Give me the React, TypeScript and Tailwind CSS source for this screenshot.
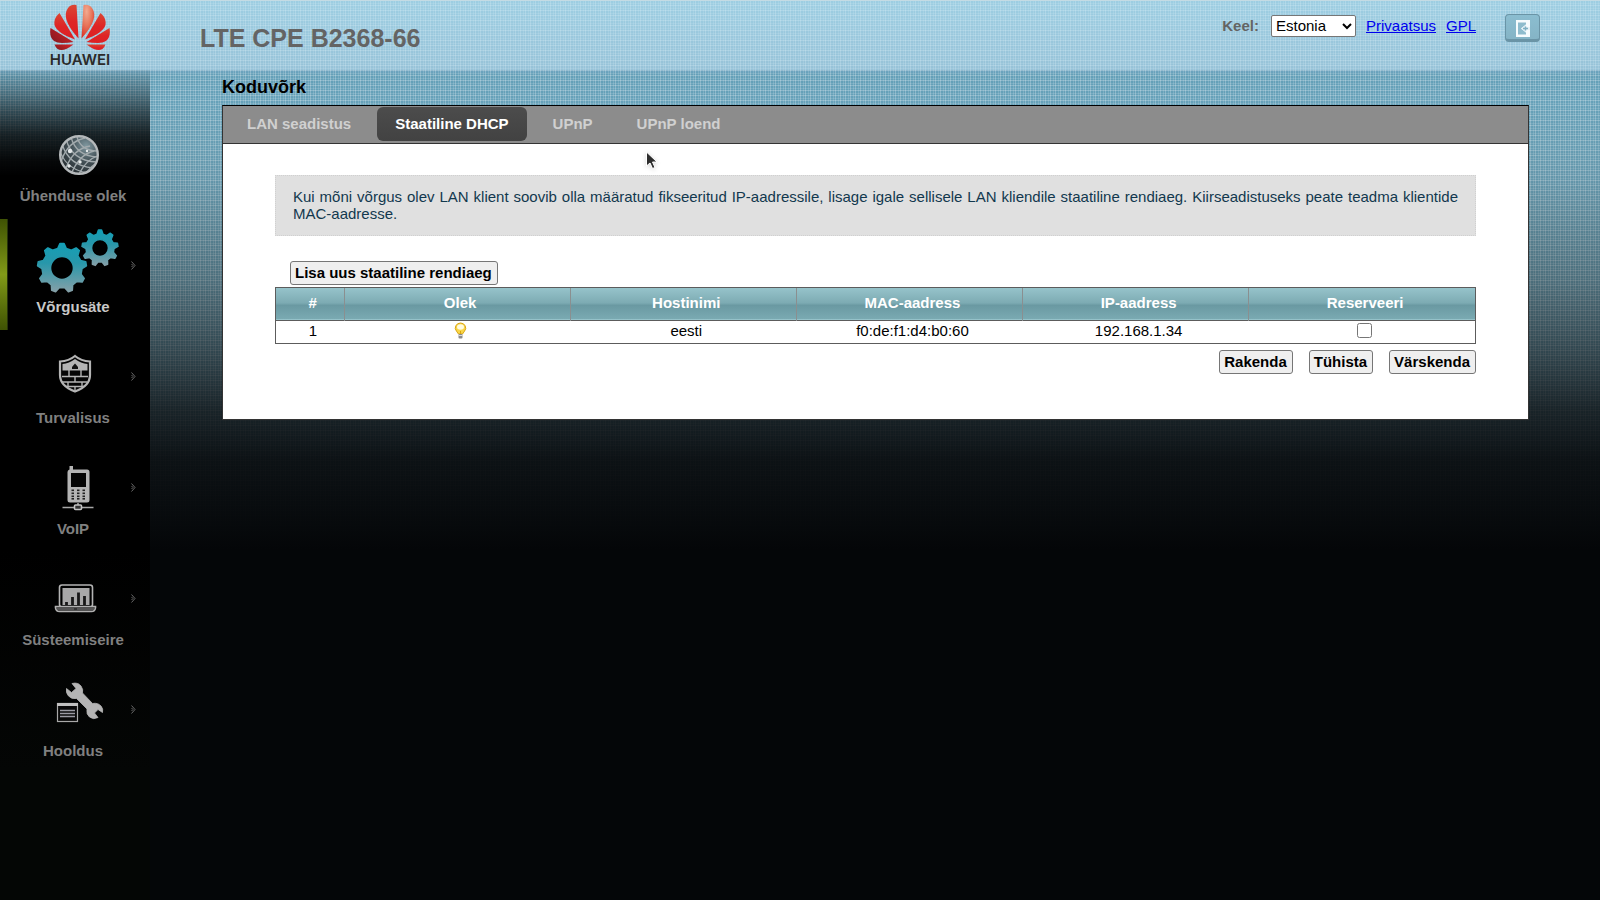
import { useState, type ReactNode } from "react";

interface MenuItem {
  label: string;
  icon: ReactNode;
  hasSubmenu: boolean;
}

interface Lease {
  id: number;
  host: string;
  mac: string;
  ip: string;
}

const leases: Lease[] = [{ id: 1, host: "eesti", mac: "f0:de:f1:d4:b0:60", ip: "192.168.1.34" }];

const tabs = ["LAN seadistus", "Staatiline DHCP", "UPnP", "UPnP loend"];

const columns = ["Olek", "Hostinimi", "MAC-aadress", "IP-aadress", "Reserveeri"];

// closed outline of a cog wheel, first tooth pointing up
const gearPath = (cx: number, cy: number, outer: number, body: number, teeth: number) => {
  const step = (Math.PI * 2) / teeth;
  const points: string[] = [];
  for (let i = 0; i < teeth; i++) {
    const mid = i * step - Math.PI / 2;
    const corners: [number, number][] = [
      [mid - step * 0.3, body],
      [mid - step * 0.12, outer],
      [mid + step * 0.12, outer],
      [mid + step * 0.3, body],
    ];
    corners.forEach(([angle, r]) => {
      points.push(`${(cx + Math.cos(angle) * r).toFixed(2)} ${(cy + Math.sin(angle) * r).toFixed(2)}`);
    });
  }
  return `M${points.join("L")}Z`;
};

const circlePath = (cx: number, cy: number, r: number) =>
  `M${cx - r} ${cy}a${r} ${r} 0 1 0 ${r * 2} 0a${r} ${r} 0 1 0 ${-r * 2} 0Z`;

function MenuIcon({ children }: { children: ReactNode }) {
  return (
    <svg viewBox="0 0 100 78" className="h-[78px] w-[100px]" fill="none" aria-hidden="true">
      {children}
    </svg>
  );
}

const globeIcon = (
  <MenuIcon>
    <defs>
      <radialGradient id="globe" cx="0.7" cy="0.25" r="0.8">
        <stop offset="0" stopColor="#7f979f" />
        <stop offset="0.5" stopColor="#46545a" />
        <stop offset="1" stopColor="#2a3236" />
      </radialGradient>
      <clipPath id="globe-clip">
        <circle cx="56" cy="47" r="18" />
      </clipPath>
    </defs>
    <circle cx="56" cy="47" r="18" fill="url(#globe)" />
    <g clipPath="url(#globe-clip)" stroke="#a3abae" strokeWidth="1.3">
      <path d="M54 29Q58 43 75 43M48 29Q53 48 75 49M43 31Q49 53 74 54M39 36Q46 58 70 60M37 43Q43 61 64 65" />
      <path d="M62 30Q44 34 38 54M67 38Q50 41 43 60M71 43Q57 46 49 64M74 48Q63 52 56 66M75 54Q68 58 63 65" />
    </g>
    <g fill="#e4e8e9">
      <circle cx="47" cy="43" r="2.2" />
      <circle cx="57" cy="54" r="1.7" />
      <circle cx="46" cy="58" r="1.7" />
      <circle cx="64" cy="43" r="1.2" />
    </g>
    <circle cx="56" cy="47" r="18.8" stroke="#b5b9bb" strokeWidth="2.4" />
  </MenuIcon>
);

const gearsIcon = (
  <MenuIcon>
    <defs>
      <linearGradient id="gear" x1="0" y1="0" x2="0" y2="1">
        <stop offset="0" stopColor="#149fb6" />
        <stop offset="0.4" stopColor="#2797aa" />
        <stop offset="1" stopColor="#84a0a8" />
      </linearGradient>
    </defs>
    <g fill="url(#gear)" fillRule="evenodd" stroke="url(#gear)" strokeWidth="1.6" strokeLinejoin="round">
      <path d={gearPath(39, 49, 24.5, 20, 9) + circlePath(39, 49, 11.5)} />
      <path d={gearPath(77, 29, 18, 14, 9) + circlePath(77, 29, 8.5)} />
    </g>
  </MenuIcon>
);

const shieldIcon = (
  <MenuIcon>
    <path
      d="M52 26Q58 31 67 31.5V45Q67 56 52 61.5Q37 56 37 45V31.5Q46 31 52 26Z"
      fill="#050505"
      stroke="#b4b4b4"
      strokeWidth="2.2"
    />
    <path d="M52 29Q58 33.500 64.500 34V40.500H39.500V34Q46 33.500 52 29Z" fill="#b4b4b4" />
    <path d="M49 39V37L52 33.500L55 37V39Z" fill="#111" />
    <path
      d="M39 46.5H65M39 52H64M43 56.5H61M46 40V46M58 40V46M52 47V52M52 57V61M45 52V56M59 52V56"
      stroke="#b4b4b4"
      strokeWidth="1.4"
    />
  </MenuIcon>
);

const phoneIcon = (
  <MenuIcon>
    <path
      d="M46.500 25H50V28.500H64Q66.500 28.500 66.500 31V59Q66.500 61.500 64 61.500H47Q44.500 61.500 44.500 59V31Q44.500 29 46.500 28.500Z"
      fill="#b4b4b4"
    />
    <rect x="48" y="32" width="15" height="14" fill="#040404" />
    <g fill="#222">
      {[48.5, 54, 59.5].map((x) =>
        [48.5, 51.5, 54.5, 57].map((y) => <rect key={`${x}-${y}`} x={x} y={y} width="2.5" height="1.6" />),
      )}
    </g>
    <path d="M39.500 66.500H70.500M55 62V64" stroke="#a8a8a8" strokeWidth="1.5" />
    <rect x="51.500" y="64" width="7" height="4.500" rx="1" fill="#333" stroke="#c4c4c4" strokeWidth="1.6" />
  </MenuIcon>
);

const laptopIcon = (
  <MenuIcon>
    <rect x="36.500" y="33" width="33" height="22" rx="2.500" stroke="#b4b4b4" strokeWidth="1.6" />
    <rect x="39.500" y="36" width="27" height="17" fill="#a8a8a8" />
    <path d="M43.500 53V50M49.500 53V45M55.500 53V40.500M61.500 53V44" stroke="#181818" strokeWidth="2.8" />
    <path d="M32.500 54.500H72.500V56Q72 59.500 68.500 59.500H36.500Q33 59.500 32.500 56Z" fill="#333" stroke="#b0b0b0" strokeWidth="1.6" />
    <path d="M34 57H51M54 57H71" stroke="#777" strokeWidth="1" />
  </MenuIcon>
);

const toolsIcon = (
  <MenuIcon>
    <rect x="34.500" y="40.500" width="20" height="18" fill="#080808" stroke="#a8a8a8" strokeWidth="1.2" />
    <path d="M34 41.500H55" stroke="#c0c0c0" strokeWidth="3" />
    <path d="M37 47.500H52M37 50.500H52M37 53.500H52" stroke="#9a9aa2" strokeWidth="1.4" />
    <path
      d="M49 20.500Q55 19 58 23Q60.500 26.500 59.500 30L69.500 40.500Q75 39.500 78 43Q80.500 46 79.500 49.500L75 46.500L71.500 50L75 54.500Q70.500 57 66.500 54Q63 51 64 46L53.500 35.500Q48.500 36.500 45.500 33Q42.500 29.500 43.500 25.500L48.500 29.500L53 25.500Z"
      fill="#b4b4b4"
      stroke="#b4b4b4"
      strokeWidth="0.8"
      strokeLinejoin="round"
    />
  </MenuIcon>
);

const menu: MenuItem[] = [
  { label: "Ühenduse olek", icon: globeIcon, hasSubmenu: false },
  { label: "Võrgusäte", icon: gearsIcon, hasSubmenu: true },
  { label: "Turvalisus", icon: shieldIcon, hasSubmenu: true },
  { label: "VoIP", icon: phoneIcon, hasSubmenu: true },
  { label: "Süsteemiseire", icon: laptopIcon, hasSubmenu: true },
  { label: "Hooldus", icon: toolsIcon, hasSubmenu: true },
];

function Logo() {
  return (
    <div className="flex w-40 flex-col items-center pt-[3px]">
      <svg viewBox="0 0 60 48" className="h-12 w-[60px]" aria-hidden="true">
        <defs>
          <linearGradient id="petal" x1="0" y1="0" x2="0" y2="1">
            <stop offset="0" stopColor="#db4633" />
            <stop offset="0.5" stopColor="#de2526" />
            <stop offset="1" stopColor="#dd2024" />
          </linearGradient>
          <linearGradient id="petal-dark" x1="1" y1="0" x2="0" y2="0.6">
            <stop offset="0" stopColor="#dc2226" />
            <stop offset="1" stopColor="#8e1b22" />
          </linearGradient>
          <radialGradient id="petal-light" cx="0.4" cy="0.2" r="0.8">
            <stop offset="0" stopColor="#f2aa90" />
            <stop offset="0.5" stopColor="#e8775c" />
            <stop offset="1" stopColor="#db3329" />
          </radialGradient>
        </defs>
        <path d="M31.500 34.500L33.500 1Q39 0 42 4Q45.500 9 43.500 16Q41 24 31.500 34.500Z" fill="url(#petal-light)" />
        <path d="M35 35.500L50.500 9Q56.500 14 55.500 21Q53 29 35 35.500Z" fill="url(#petal)" />
        <path d="M36.500 38L59.500 24Q61 33 56 37Q53 39 48 39Q42 39 36.500 38Z" fill="url(#petal)" />
        <path d="M36.500 40.500H55.500Q53.500 46 48.500 46Q44 46 36.500 40.500Z" fill="url(#petal)" />
        <path d="M28.500 34.500L26.500 1Q21 0 18 4Q14.500 9 16.500 16Q19 24 28.500 34.500Z" fill="url(#petal)" />
        <path d="M25 35.500L9.500 9Q3.500 14 4.500 21Q7 29 25 35.500Z" fill="url(#petal)" />
        <path d="M23.500 38L0.500 24Q-1 33 4 37Q7 39 12 39Q18 39 23.500 38Z" fill="url(#petal-dark)" />
        <path d="M23.500 40.500H4.500Q6.500 46 11.500 46Q16 46 23.500 40.500Z" fill="url(#petal-dark)" />
      </svg>
      <span className="font-['Inter',sans-serif] text-[15px] leading-4 font-semibold text-[#2b2a29]">HUAWEI</span>
    </div>
  );
}

function Header() {
  return (
    <header className="flex h-[70px] items-start border-t border-[#c4dbe4] bg-[#c6e6f4]/45">
      <Logo />
      <h1 className="ml-10 pt-[21px] text-[25px] leading-8 font-bold text-[#646464]">LTE CPE B2368-66</h1>
      <div className="mr-[60px] ml-auto flex items-start">
        <div className="mt-3.5 flex h-[21px] items-center">
          <label htmlFor="lang" className="mr-3 font-bold text-[#646464]">
            Keel:
          </label>
          <select
            id="lang"
            className="h-[22px] w-[85px] rounded-[2px] border border-[#767676] bg-white leading-[17px] text-black"
            defaultValue="Estonia"
          >
            <option>Estonia</option>
            <option>English</option>
          </select>
          <a href="#privacy" className="ml-2.5 text-[#0000ee] underline">
            Privaatsus
          </a>
          <a href="#gpl" className="ml-2.5 text-[#0000ee] underline">
            GPL
          </a>
        </div>
        <button
          type="button"
          aria-label="Logi välja"
          className="mt-[13px] ml-[29px] flex h-7 w-[35px] items-center justify-center rounded border border-b-3 border-[#6a94a6] bg-linear-to-b from-[#8bbdd0] to-[#85b4c6]"
        >
          <svg viewBox="0 0 14 17" className="mt-0.5 h-[17px] w-3.5" aria-hidden="true">
            <path d="M0 0H14V17H0Z" fill="#f6fbfd" />
            <path d="M2 2.500H10V4.500L5 8.500L10 12.500V14.500H2Z" fill="#8fbccd" />
            <path d="M5 8.500L10 4.500V7H14V10H10V12.500Z" fill="#e4f1f6" />
            <path d="M7 8.500H12M9.500 6.500V10.500" stroke="#7fb0c3" strokeWidth="1.5" />
          </svg>
        </button>
      </div>
    </header>
  );
}

function Sidebar() {
  const active = "Võrgusäte";

  return (
    <nav className="w-[150px] shrink-0 bg-[linear-gradient(to_bottom,rgba(0,0,0,0.05)_0px,rgba(0,0,0,0.3)_22px,rgba(0,0,0,0.55)_42px,rgba(0,0,0,0.8)_65px,rgba(0,0,0,0.95)_90px,#000_106px,#000_480px,#040605_700px)] pt-[38px]">
      <ul>
        {menu.map((item) => (
          <li
            key={item.label}
            className={`relative h-[111px] ${
              item.label === active
                ? "before:absolute before:inset-y-0 before:left-0 before:w-2 before:border-r before:border-[#26330a] before:bg-linear-to-b before:from-[#3f5204] before:via-[#829b18] before:to-[#3f5204]"
                : ""
            }`}
          >
            <a href="#menu" className="flex h-full w-[146px] flex-col items-center">
              {item.icon}
              <span className={`leading-5 font-bold ${item.label === active ? "text-[#c8c8c8]" : "text-[#808080]"}`}>
                {item.label}
              </span>
            </a>
            {item.hasSubmenu && (
              <svg viewBox="0 0 5 9" className="absolute top-[42px] left-[131px] h-[9px] w-[5px]" aria-hidden="true">
                <path d="M0.500 0.500L4 4.500L0.500 8.500M0.500 3L2 4.500L0.500 6" fill="none" stroke="#686868" />
              </svg>
            )}
          </li>
        ))}
      </ul>
    </nav>
  );
}

function PlainButton({ children }: { children: ReactNode }) {
  return (
    <button
      type="button"
      className="h-6 rounded-[3px] border border-[#767676] bg-[#efefef] pr-[5px] pb-px pl-1 leading-[17px] font-bold text-black"
    >
      {children}
    </button>
  );
}

function BulbIcon() {
  return (
    <svg viewBox="0 0 13 17" className="mx-auto block h-[17px] w-[13px]" role="img" aria-label="Aktiivne">
      <path d="M6.500 1A5.200 5 0 0 1 10.500 9.200L8.500 12H4.500L2.500 9.200A5.200 5 0 0 1 6.500 1Z" fill="#f9d648" stroke="#d9a514" />
      <ellipse cx="6.500" cy="5" rx="3.500" ry="2.800" fill="#fffbe0" />
      <path d="M6.500 9V12" stroke="#d9a514" />
      <rect x="4.500" y="12" width="4" height="4.500" rx="1" fill="#8b8b8b" />
      <path d="M4.500 13.500H8.500" stroke="#ddd" />
    </svg>
  );
}

function LeaseTable() {
  const [reserved, setReserved] = useState<number[]>([]);

  const toggle = (id: number) => {
    setReserved((prev) => (prev.includes(id) ? prev.filter((x) => x !== id) : [...prev, id]));
  };

  return (
    <div className="mt-0.5 border border-[#5c5c5c]">
      <table className="w-full table-fixed border-collapse text-center">
        <thead>
          <tr className="h-8 border-b border-[#5c5c5c] bg-[linear-gradient(to_bottom,#96c3ca_0%,#7dabb3_48%,#6a99a2_56%,#7aaab2_100%)] text-white">
            <th className="w-[68px] border-r border-[#8a8f90] pb-0.5 pl-1.5">#</th>
            {columns.map((name) => (
              <th key={name} className="border-r border-[#8a8f90] pb-0.5 pl-1.5 last:border-r-0">
                {name}
              </th>
            ))}
          </tr>
        </thead>
        <tbody>
          {leases.map((lease) => (
            <tr key={lease.id} className="h-[23px] *:pb-0.5 *:pl-1.5">
              <td>{lease.id}</td>
              <td>
                <BulbIcon />
              </td>
              <td>{lease.host}</td>
              <td>{lease.mac}</td>
              <td>{lease.ip}</td>
              <td>
                <input
                  type="checkbox"
                  aria-label={`Reserveeri ${lease.ip}`}
                  className="mx-auto block size-[15px]"
                  checked={reserved.includes(lease.id)}
                  onChange={() => toggle(lease.id)}
                />
              </td>
            </tr>
          ))}
        </tbody>
      </table>
    </div>
  );
}

export default function App() {
  const [tab, setTab] = useState("Staatiline DHCP");

  return (
    <div className="relative flex min-h-screen flex-col bg-[linear-gradient(to_bottom,rgba(4,6,8,0)_100px,rgba(4,6,8,0.08)_180px,rgba(4,6,8,0.3)_280px,rgba(4,6,8,0.56)_350px,rgba(4,6,8,0.8)_410px,rgba(4,6,8,0.92)_460px,#040608_550px),repeating-linear-gradient(to_right,rgba(255,255,255,0.24)_0px_1px,transparent_1px_3px,rgba(255,255,255,0.14)_3px_4px,transparent_4px_5px),repeating-linear-gradient(to_bottom,rgba(255,255,255,0.24)_0px_1px,transparent_1px_3px,rgba(255,255,255,0.12)_3px_4px,transparent_4px_5px),linear-gradient(to_bottom,#7dbad4_0px,#72a6c2_69px,#64a0b8_75px,#6ba4bb_150px,#6a9aac_300px)] font-['Liberation_Sans',Arial,sans-serif] text-[15px] leading-[17px]">
      <Header />
      <div className="flex flex-1">
        <Sidebar />
        <main className="mr-[71px] ml-[72px] min-w-0 flex-1">
          <h2 className="h-[35px] pt-[7px] text-[18px] leading-5 font-bold text-black">Koduvõrk</h2>
          <section className="border border-t-black border-r-[#333] border-b-[#333] border-l-[#333] bg-white pb-[45px]">
            <div className="flex h-[38px] gap-2 border-b border-[#333] bg-[#8c8c8c] px-1.5 pt-px">
              {tabs.map((name) => (
                <button
                  key={name}
                  type="button"
                  onClick={() => setTab(name)}
                  className={`h-[34px] rounded-md px-[18px] pb-0.5 font-bold ${
                    name === tab ? "bg-linear-to-b from-[#4c4c4c] to-[#424242] text-white" : "text-[#d0d0d0]"
                  }`}
                >
                  {name}
                </button>
              ))}
            </div>
            <div className="px-[52px] pt-[31px]">
              <p className="border border-dotted border-[#d0d0d0] bg-[#e0e0e0] px-[17px] pt-3 pb-[13px] text-justify text-[#12384e]">
                Kui mõni võrgus olev LAN klient soovib olla määratud fikseeritud IP-aadressile, lisage igale sellisele
                LAN kliendile staatiline rendiaeg. Kiirseadistuseks peate teadma klientide MAC-aadresse.
              </p>
              <div className="mt-[25px] flex pl-[15px]">
                <PlainButton>Lisa uus staatiline rendiaeg</PlainButton>
              </div>
              <LeaseTable />
              <div className="mt-1.5 flex justify-end gap-4">
                <PlainButton>Rakenda</PlainButton>
                <PlainButton>Tühista</PlainButton>
                <PlainButton>Värskenda</PlainButton>
              </div>
            </div>
          </section>
        </main>
      </div>
      <svg viewBox="0 0 14 20" className="absolute top-[151px] left-[645px] h-5 w-3.5 drop-shadow-sm" aria-hidden="true">
        <path d="M1.500 1V15L5 12L7.500 17.500L10 16.500L7.500 11H12Z" fill="#2d2d2d" stroke="#fff" strokeWidth="1" />
      </svg>
    </div>
  );
}
